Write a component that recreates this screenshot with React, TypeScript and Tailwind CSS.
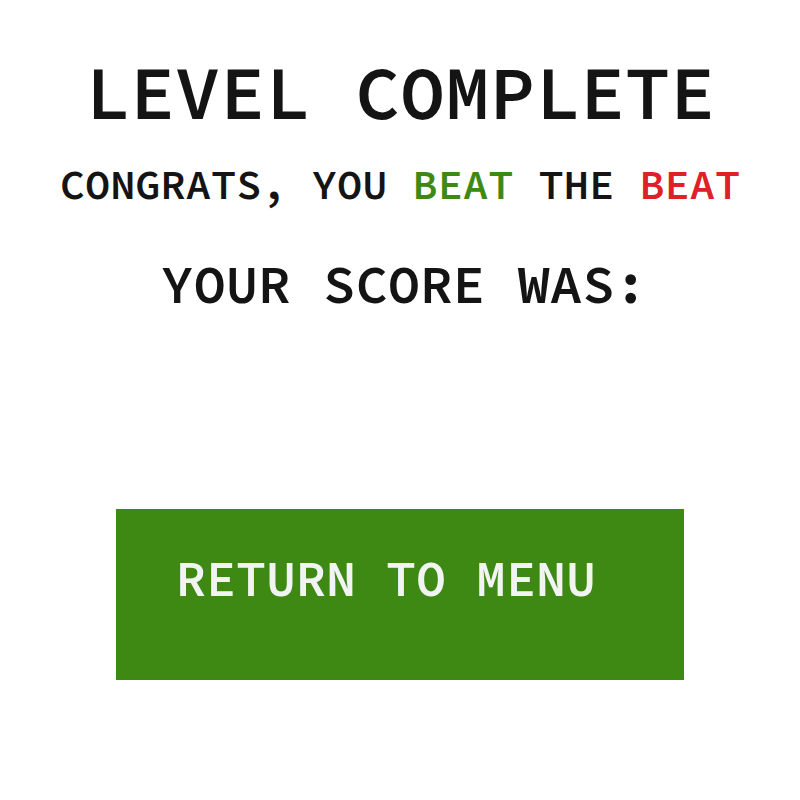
export default function App() {
  return (
    <main className="flex min-h-screen flex-col items-center bg-white pt-[52px] font-['Source_Code_Pro','Liberation_Mono',monospace] font-semibold whitespace-nowrap text-[#151414]">
      <h1 className="text-[75px] leading-[80px]">LEVEL COMPLETE</h1>
      <p className="mt-6 text-[42px] leading-[56px]">
        CONGRATS, YOU <span className="text-[#3e8914]">BEAT</span> THE{' '}
        <span className="text-[#df2029]">BEAT</span>
      </p>
      <h2 className="mt-10 pl-2 text-[54px] leading-[64px]">YOUR SCORE WAS:</h2>
      <button
        type="button"
        className="mt-[193px] w-[71%] cursor-pointer bg-[#3e8914] px-[60px] pt-[38px] pb-[69px] text-left text-[50px] leading-[64px] text-[#f2f4f3]"
      >
        RETURN TO MENU
      </button>
    </main>
  )
}
